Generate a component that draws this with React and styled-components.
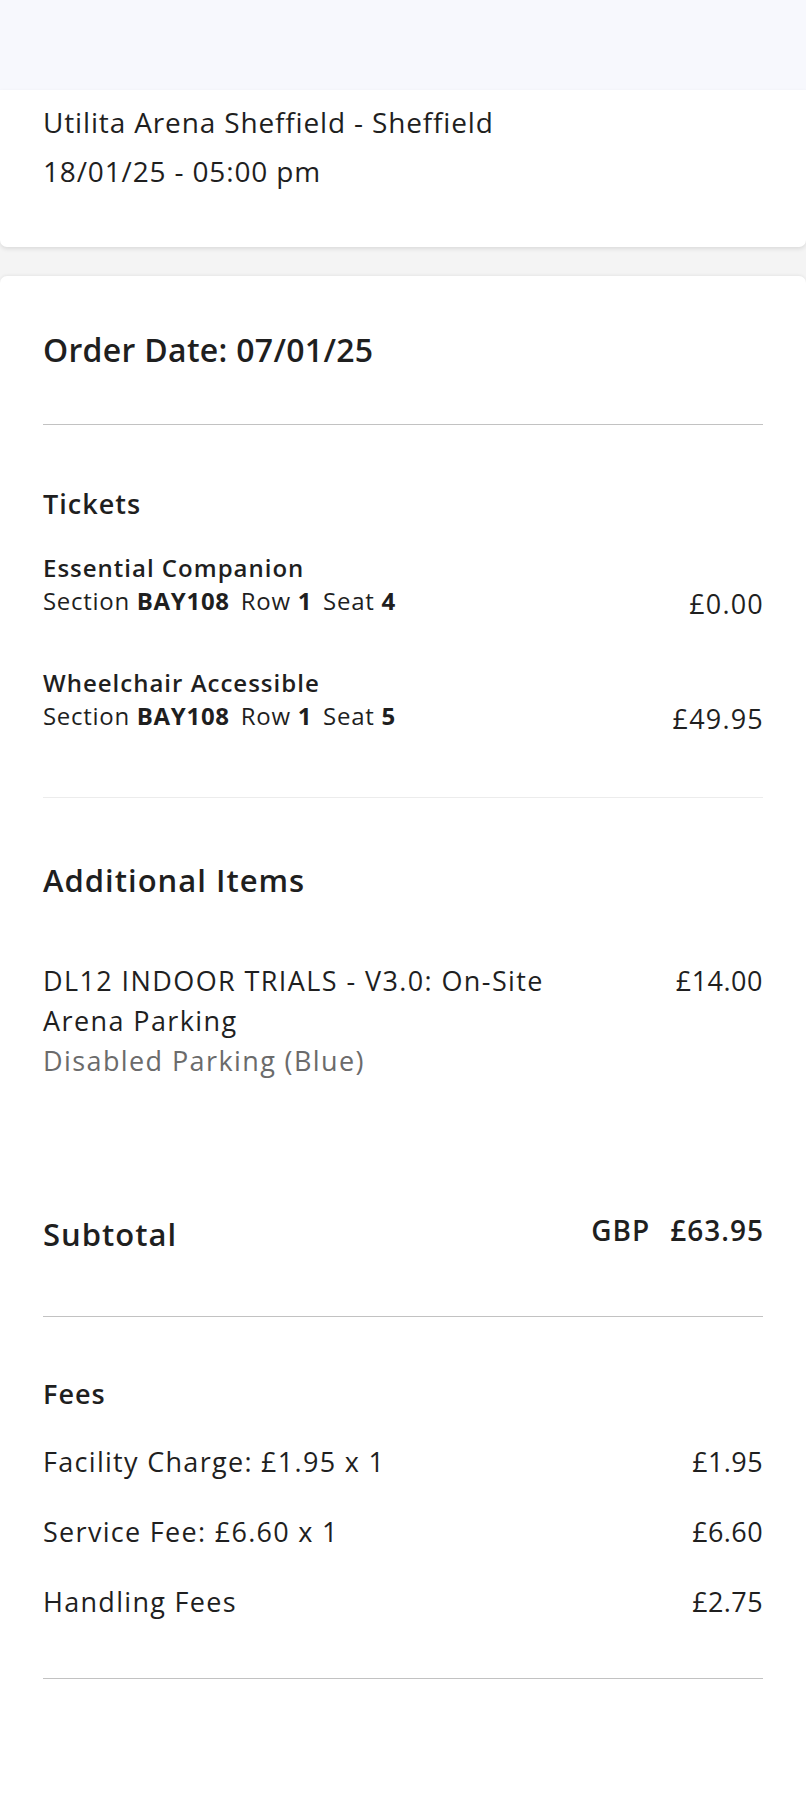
import React from 'react';
import styled, { createGlobalStyle } from 'styled-components';

const textColor = '#1f1f1f';

const GlobalStyle = createGlobalStyle`
  * { box-sizing: border-box; }
  body {
    margin: 0;
    background: #f4f4f4;
    font-family: "Open Sans", Lato, "Noto Sans", sans-serif;
    color: ${textColor};
  }
`;

const Page = styled.div`
  min-height: 1795px;
  background: #f4f4f4;
  display: flex;
  flex-direction: column;
`;

const TopBand = styled.div`
  height: 90px;
  background: #f7f8fd;
`;

const VenueCard = styled.div`
  background: #fff;
  border-radius: 0 0 7px 7px;
  box-shadow: 0 2px 4px rgba(0, 0, 0, 0.1);
  padding: 8px 43px 51px;
`;

const VenueLine = styled.div`
  font-size: 28px;
  line-height: 49px;
  letter-spacing: 0.85px;
`;

const OrderCard = styled.div`
  flex: 1;
  margin-top: 29px;
  background: #fff;
  border-radius: 7px 7px 0 0;
  box-shadow: 0 -1px 3px rgba(0, 0, 0, 0.06);
  padding: 54px 43px 0;
  display: flex;
  flex-direction: column;
`;

const OrderDate = styled.div`
  font-size: 32px;
  line-height: 40px;
  font-weight: 600;
  letter-spacing: 0.3px;
`;

const Divider = styled.hr`
  margin: ${p => p.$top}px 0 0;
  border: 0;
  height: 1px;
  background: ${p => (p.$light ? '#ececec' : '#c2c2c2')};
`;

const SectionTitle = styled.div`
  margin-top: ${p => p.$top}px;
  font-size: ${p => p.$size}px;
  line-height: ${p => p.$line}px;
  font-weight: 600;
  letter-spacing: 1px;
`;

const TicketRow = styled.div`
  margin-top: ${p => p.$top}px;
  display: flex;
  justify-content: space-between;
  align-items: flex-end;
`;

const TicketInfo = styled.div`
  display: flex;
  flex-direction: column;
  gap: 3px;
`;

const TicketName = styled.div`
  font-size: 24px;
  line-height: 30px;
  font-weight: 600;
  letter-spacing: 1px;
`;

const TicketSeat = styled.div`
  font-size: 24px;
  line-height: 30px;
  letter-spacing: 0.7px;

  b { font-weight: 700; margin-right: 11px; }
`;

const Price = styled.div`
  font-size: 27px;
  line-height: 24px;
  letter-spacing: 1.2px;
  margin-right: -1px;
`;

const ItemRow = styled.div`
  margin-top: 61px;
  display: flex;
  justify-content: space-between;
  align-items: flex-start;
  gap: 40px;
  font-size: 27px;
  line-height: 40px;
`;

const ItemText = styled.div`
  max-width: 560px;
  letter-spacing: 1.4px;
`;

const ItemSub = styled.div`
  color: #6b6b6b;
`;

const ItemPrice = styled.div`
  letter-spacing: 0.5px;
`;

const SubtotalRow = styled.div`
  margin-top: 133px;
  display: flex;
  justify-content: space-between;
  align-items: flex-start;
`;

const SubtotalAmount = styled.div`
  display: flex;
  gap: 20px;
  font-size: 28px;
  line-height: 32px;
  font-weight: 600;
  letter-spacing: 1px;
  margin-right: -1px;
`;

const FeeList = styled.div`
  margin-top: 32px;
  display: flex;
  flex-direction: column;
  gap: 30px;
`;

const FeeRow = styled.div`
  display: flex;
  justify-content: space-between;
  font-size: 27px;
  line-height: 40px;
`;

const FeeLabel = styled.span`
  letter-spacing: 1.3px;
`;

const FeeAmount = styled.span`
  letter-spacing: 0.4px;
`;

const tickets = [
  { name: 'Essential Companion', seat: '4', price: '£0.00', top: 33 },
  { name: 'Wheelchair Accessible', seat: '5', price: '£49.95', top: 52 },
];

const fees = [
  ['Facility Charge: £1.95 x 1', '£1.95'],
  ['Service Fee: £6.60 x 1', '£6.60'],
  ['Handling Fees', '£2.75'],
];

export default function App() {
  return (
    <Page>
      <GlobalStyle />
      <TopBand />
      <VenueCard>
        <VenueLine>Utilita Arena Sheffield - Sheffield</VenueLine>
        <VenueLine>18/01/25 - 05:00 pm</VenueLine>
      </VenueCard>
      <OrderCard>
        <OrderDate>Order Date: 07/01/25</OrderDate>
        <Divider $top={54} />

        <SectionTitle $top={63} $size={27} $line={32}>Tickets</SectionTitle>
        {tickets.map(t => (
          <TicketRow key={t.name} $top={t.top}>
            <TicketInfo>
              <TicketName>{t.name}</TicketName>
              <TicketSeat>
                Section <b>BAY108</b>Row <b>1</b>Seat <b>{t.seat}</b>
              </TicketSeat>
            </TicketInfo>
            <Price>{t.price}</Price>
          </TicketRow>
        ))}
        <Divider $top={66} $light />

        <SectionTitle $top={62} $size={31} $line={40}>Additional Items</SectionTitle>
        <ItemRow>
          <ItemText>
            DL12 INDOOR TRIALS - V3.0: On-Site Arena Parking
            <ItemSub>Disabled Parking (Blue)</ItemSub>
          </ItemText>
          <ItemPrice>£14.00</ItemPrice>
        </ItemRow>

        <SubtotalRow>
          <SectionTitle $top={0} $size={31} $line={40}>Subtotal</SectionTitle>
          <SubtotalAmount>
            <span>GBP</span>
            <span>£63.95</span>
          </SubtotalAmount>
        </SubtotalRow>
        <Divider $top={62} />

        <SectionTitle $top={61} $size={27} $line={32}>Fees</SectionTitle>
        <FeeList>
          {fees.map(([label, amount]) => (
            <FeeRow key={label}>
              <FeeLabel>{label}</FeeLabel>
              <FeeAmount>{amount}</FeeAmount>
            </FeeRow>
          ))}
        </FeeList>
        <Divider $top={56} />
      </OrderCard>
    </Page>
  );
}
